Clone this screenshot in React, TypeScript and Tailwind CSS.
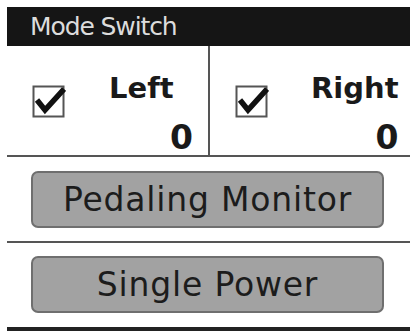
function CheckBox() {
  return (
    <svg width="34" height="34" viewBox="0 0 34 34" className="shrink-0">
      <rect x="1.5" y="2.5" width="30" height="30" fill="none" stroke="#555" strokeWidth="2" />
      <path d="M5 16 L13 26 L32 5" fill="none" stroke="#111" strokeWidth="5.5" strokeLinejoin="miter" />
    </svg>
  )
}

function Side({ label, gap }: { label: string; gap: string }) {
  return (
    <div className="flex items-center pl-[25px] pr-[15px]">
      <CheckBox />
      <div className={`flex flex-1 flex-col ${gap} pt-[26px]`}>
        <span className="text-[29px] font-bold leading-none text-[#1a1a1a]">{label}</span>
        <span className="mt-[18px] text-right text-[33px] font-bold leading-none text-[#1a1a1a]">0</span>
      </div>
    </div>
  )
}

function Btn({ label }: { label: string }) {
  return (
    <div className="mx-[24px] flex h-[57px] w-[353px] items-center justify-center rounded-[7px] border-2 border-[#6f6f6f] bg-[#a2a2a2]">
      <span className="text-[33px] leading-none tracking-[0.8px] text-[#1c1c1c]">{label}</span>
    </div>
  )
}

export default function App() {
  return (
    <div
      className="h-[331px] w-[417px] overflow-hidden bg-white px-[7px] pt-[7px]"
      style={{ fontFamily: '"DejaVu Sans", sans-serif' }}
    >
      <div className="flex h-[39px] items-center bg-[#151515] pl-[23px]">
        <span className="text-[25px] leading-none tracking-[-1.1px] text-[#dcdcdc]">Mode Switch</span>
      </div>
      <div className="grid h-[109px] grid-cols-[203px_1fr]">
        <div className="flex items-center border-r-2 border-[#555]">
          <div className="w-full"><Side label="Left" gap="pl-[43px]" /></div>
        </div>
        <div className="flex items-center">
          <div className="w-full"><Side label="Right" gap="pl-[42px]" /></div>
        </div>
      </div>
      <div className="h-[2px] bg-[#555]" />
      <div className="pt-[14px]"><Btn label="Pedaling Monitor" /></div>
      <div className="mt-[13px] h-[2px] bg-[#555]" />
      <div className="pt-[13px]"><Btn label="Single Power" /></div>
      <div className="mt-[14px] h-[4px] bg-[#222]" />
    </div>
  )
}
